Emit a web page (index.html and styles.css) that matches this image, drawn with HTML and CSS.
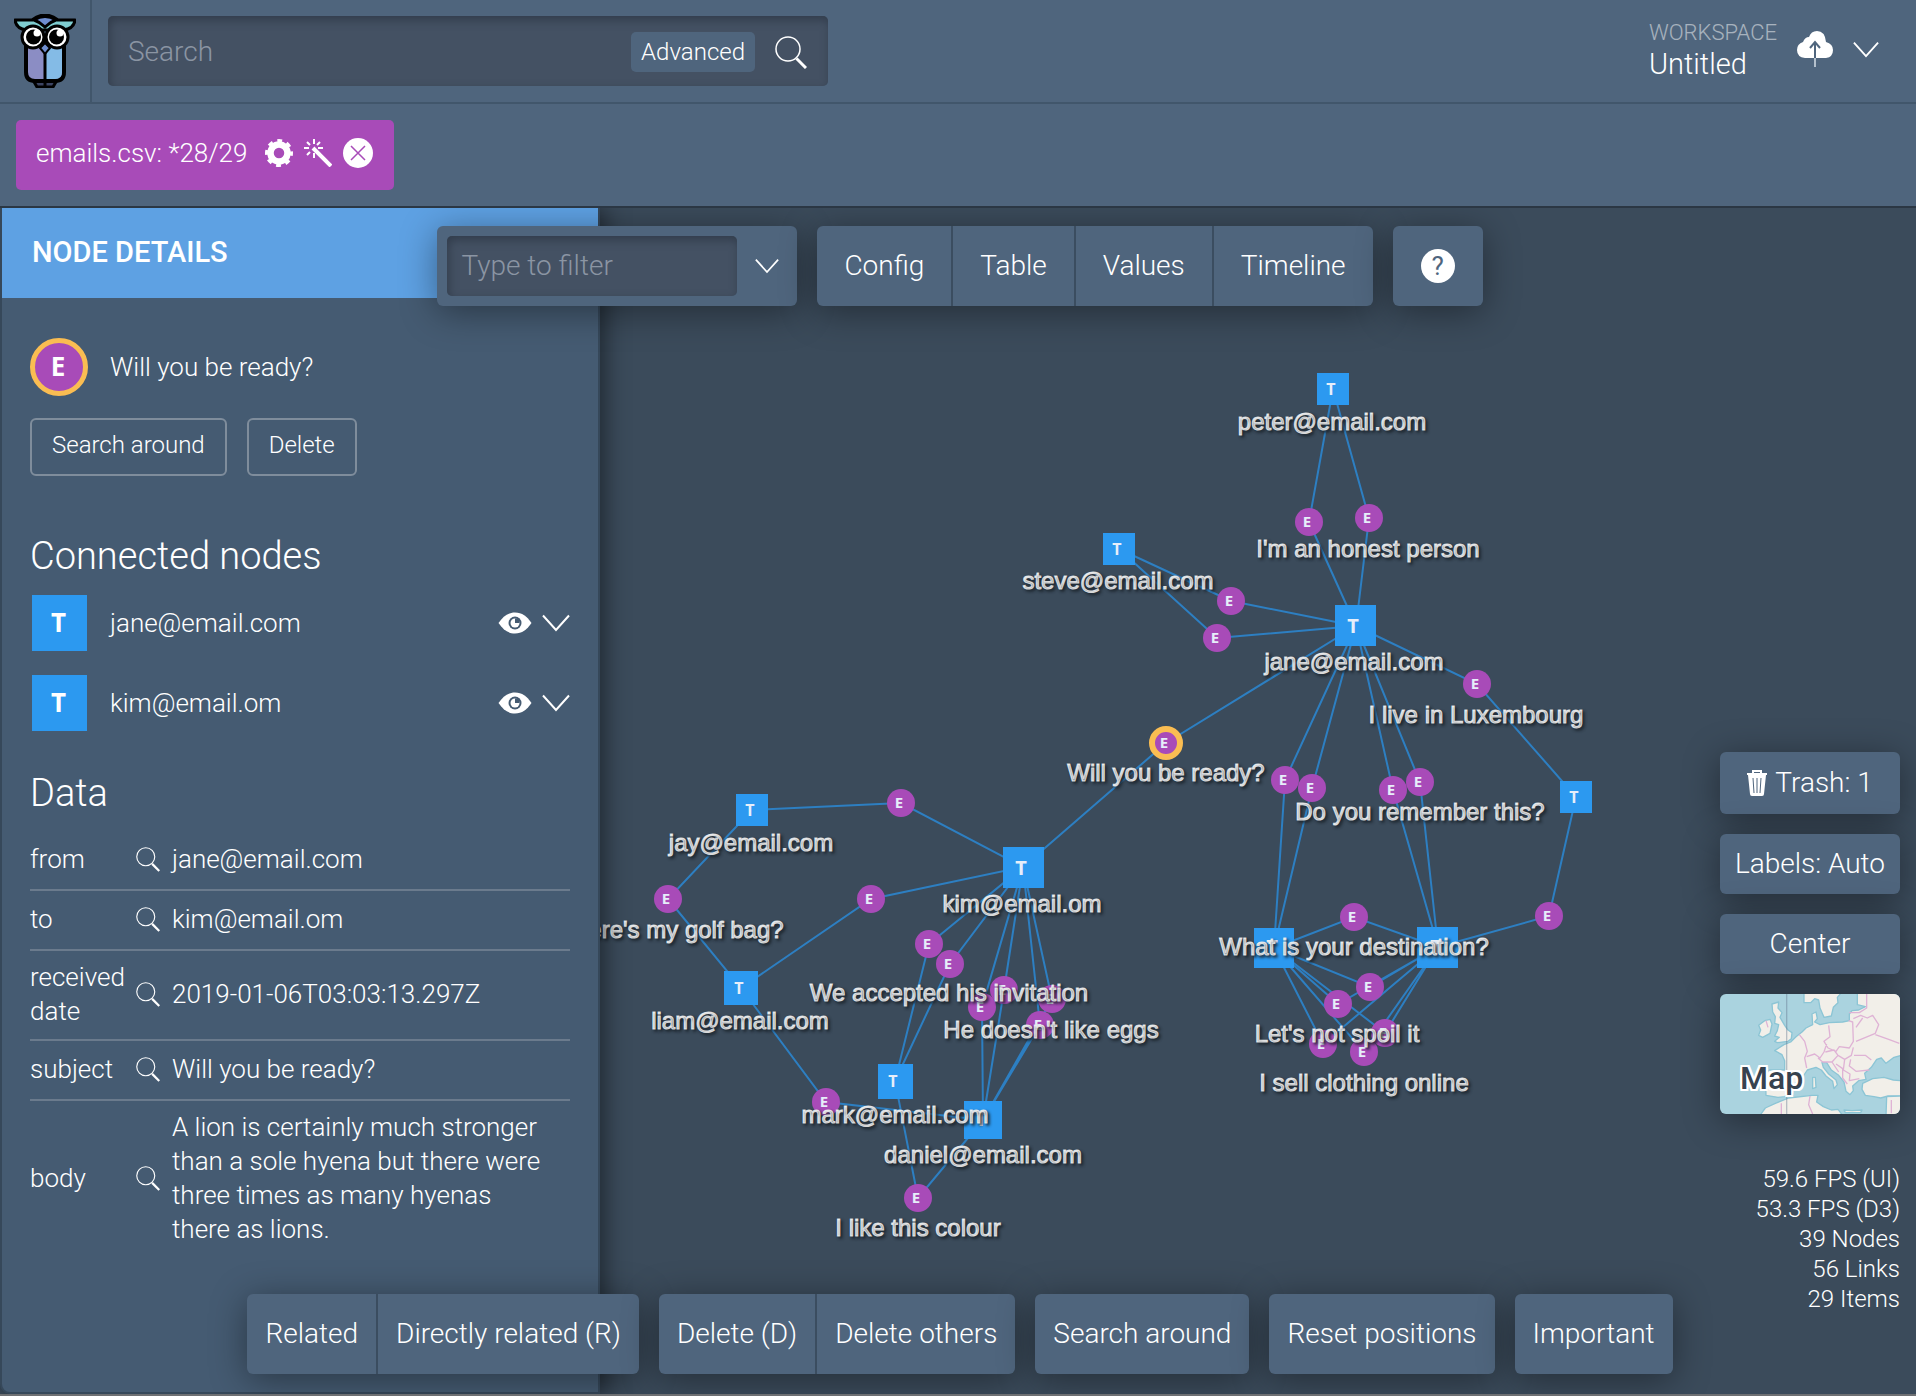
FILE: index.html
```html
<!DOCTYPE html>
<html lang="en">
<head>
<meta charset="utf-8">
<title>Untitled workspace</title>
<link rel="stylesheet" href="styles.css">
</head>
<body>
<svg class="sprite" aria-hidden="true">
  <symbol id="icon-search" viewBox="0 0 32 34"><circle cx="13" cy="14" r="12" fill="none" stroke="currentColor" stroke-width="1.5"/><path d="M21.500 23.500L31 33" stroke="currentColor" stroke-width="3"/></symbol>
  <symbol id="icon-chevron" viewBox="0 0 28 18"><path d="M1 1.500L14 16L27 1.500" fill="none" stroke="currentColor" stroke-width="2"/></symbol>
  <symbol id="icon-eye" viewBox="0 0 34 22"><path d="M0.500 11C5 4.500 10 0.500 17 0.500S29 4.500 33.500 11C29 17.500 24 21.500 17 21.500S5 17.500 0.500 11Z" fill="currentColor"/><circle cx="17" cy="11" r="6.500" fill="#455b72"/><circle cx="17" cy="11" r="4.500" fill="currentColor"/><path d="M17 6.500V11H21.500V6.500Z" fill="#455b72"/></symbol>
</svg>

<header class="topbar">
  <a class="logo" href="#" aria-label="Home">
    <svg width="62" height="74" viewBox="0 0 62 74">
      <path d="M19 66h24l-4 7H23z" fill="#3c4463" stroke="#000" stroke-width="3" stroke-linejoin="round"/>
      <path d="M12 28h38v30q0 9-9 9H21q-9 0-9-9z" fill="#8b8dc4" stroke="#000" stroke-width="4"/>
      <path d="M31 30h17v28q0 7-7 7H31z" fill="#84bbe6"/>
      <path d="M31 34v38" stroke="#000" stroke-width="3"/>
      <path d="M1 6h17q13-10 26 0h17q-1 9-12 10H13Q2 15 1 6z" fill="#7fcdd0" stroke="#000" stroke-width="3" stroke-linejoin="round"/>
      <path d="M20 6q11-7 22 0-6 2-11 7-5-5-11-7z" fill="#6f8ed0" stroke="#000" stroke-width="3"/>
      <circle cx="19" cy="23" r="11" fill="#fff" stroke="#000" stroke-width="3"/>
      <circle cx="43" cy="23" r="11" fill="#fff" stroke="#000" stroke-width="3"/>
      <circle cx="19.500" cy="23" r="7.500"/><circle cx="42.500" cy="23" r="7.500"/>
      <circle cx="23" cy="19" r="3.500" fill="#fff"/><circle cx="46" cy="19" r="3.500" fill="#fff"/>
      <path d="M31 29l5 5-5 6-5-6z" fill="#6f8ed0" stroke="#000" stroke-width="2"/>
    </svg>
  </a>
  <form class="search">
    <input class="search-input" type="text" placeholder="Search" aria-label="Search">
    <button class="search-advanced" type="button">Advanced</button>
    <button class="icon-button" type="button" aria-label="Run search"><svg width="32" height="34"><use href="#icon-search"/></svg></button>
  </form>
  <div class="workspace">
    <div class="workspace-label">
      <span class="workspace-caption">WORKSPACE</span>
      <span class="workspace-name">Untitled</span>
    </div>
    <button class="icon-button" type="button" aria-label="Save workspace">
      <svg width="36" height="36" viewBox="0 0 36 36"><path d="M8 27Q0 26 0 19q0-6 6-8Q8 6 12 6q2-6 8-6 8 0 9 11 7 2 7 8 0 7-7 8z" fill="#fff"/><path d="M18 12v24" stroke="#4f657d" stroke-width="2"/><path d="M18 27v9" stroke="#b4c0cc" stroke-width="2"/><path d="M13 17l5-6 5 6" fill="none" stroke="#4f657d" stroke-width="2"/></svg>
    </button>
    <button class="icon-button" type="button" aria-label="Workspace menu"><svg width="26" height="17"><use href="#icon-chevron"/></svg></button>
  </div>
</header>

<nav class="sources" aria-label="Data sources">
  <div class="source">
    <span>emails.csv: *28/29</span>
    <button class="icon-button" type="button" aria-label="Configure">
      <svg width="28" height="28" viewBox="0 0 28 28"><circle cx="14" cy="14" r="8.500" fill="none" stroke="#fff" stroke-width="6.500"/><circle cx="14" cy="14" r="12" fill="none" stroke="#fff" stroke-width="4" stroke-dasharray="4.700 4.720" stroke-dashoffset="2"/></svg>
    </button>
    <button class="icon-button" type="button" aria-label="Automagic">
      <svg width="28" height="28" viewBox="0 0 28 28" fill="none" stroke="#fff"><path d="M9 9l18 18" stroke-width="4"/><path d="M10 0v5M10 14v5M0 9h5M14 9h5M3 3l3 3M16 3l-3 3M3 16l3-3" stroke-width="2"/></svg>
    </button>
    <button class="icon-button" type="button" aria-label="Close">
      <svg width="30" height="30" viewBox="0 0 30 30"><circle cx="15" cy="15" r="15" fill="#fff"/><path d="M8 8l14 14M22 8L8 22" stroke="#a84bb8" stroke-width="1.500"/></svg>
    </button>
  </div>
</nav>

<main class="stage">
  <svg class="graph" viewBox="0 208 1916 1188" preserveAspectRatio="xMidYMid meet" role="img" aria-label="Graph of emails">
    <g class="links">
      <path d="M1333 389L1309 522L1356 626M1333 389L1369 518L1356 626"/>
      <path d="M1119 549L1231 601L1356 626M1119 549L1217 638L1356 626"/>
      <path d="M1356 626L1166 743L1023 867"/>
      <path d="M1356 626L1285 780L1274 948M1356 626L1312 788L1274 948"/>
      <path d="M1356 626L1393 790L1438 947M1356 626L1420 782L1438 947"/>
      <path d="M1356 626L1477 684L1576 797L1549 916L1438 947"/>
      <path d="M1274 948L1354 917L1438 947M1274 948L1370 987L1438 947M1274 948L1338 1004L1438 947"/>
      <path d="M1274 948L1323 1044L1438 947M1274 948L1364 1052L1438 947M1274 948L1385 1033L1438 947"/>
      <path d="M1023 867L901 803L752 810L668 899L741 988L826 1102L983 1120"/>
      <path d="M1023 867L871 899L741 988"/>
      <path d="M1023 867L929 944L895 1081M1023 867L950 964L895 1081L918 1198L983 1120"/>
      <path d="M1023 867L1004 990L983 1120M1023 867L982 1007L983 1120"/>
      <path d="M1023 867L1052 999L983 1120M1023 867L1040 1025L983 1120"/>
    </g>
    <g class="people">
      <rect x="1317" y="373" width="32" height="32"/><text x="1331" y="395">T</text>
      <rect x="1103" y="533" width="32" height="32"/><text x="1117" y="555">T</text>
      <rect x="1335" y="605" width="41" height="41"/><text class="big" x="1353" y="633">T</text>
      <rect x="1560" y="781" width="32" height="32"/><text x="1574" y="803">T</text>
      <rect x="1254" y="928" width="40" height="40"/><text class="big" x="1272" y="954">T</text>
      <rect x="1417" y="927" width="41" height="41"/><text class="big" x="1436" y="954">T</text>
      <rect x="736" y="794" width="32" height="32"/><text x="750" y="816">T</text>
      <rect x="1003" y="847" width="41" height="41"/><text class="big" x="1021" y="875">T</text>
      <rect x="724" y="971" width="34" height="34"/><text x="739" y="994">T</text>
      <rect x="878" y="1064" width="35" height="35"/><text x="893" y="1087">T</text>
      <rect x="964" y="1101" width="38" height="38"/><text class="big" x="981" y="1126">T</text>
    </g>
    <g class="mails">
      <circle cx="1309" cy="522" r="14"/><text x="1307" y="527">E</text>
      <circle cx="1369" cy="518" r="14"/><text x="1367" y="523">E</text>
      <circle cx="1231" cy="601" r="14"/><text x="1229" y="606">E</text>
      <circle cx="1217" cy="638" r="14"/><text x="1215" y="643">E</text>
      <circle cx="1477" cy="684" r="14"/><text x="1475" y="689">E</text>
      <circle class="selected" cx="1166" cy="743" r="14"/><text x="1164" y="748">E</text>
      <circle cx="1285" cy="780" r="14"/><text x="1283" y="785">E</text>
      <circle cx="1312" cy="788" r="14"/><text x="1310" y="793">E</text>
      <circle cx="1393" cy="790" r="14"/><text x="1391" y="795">E</text>
      <circle cx="1420" cy="782" r="14"/><text x="1418" y="787">E</text>
      <circle cx="1549" cy="916" r="14"/><text x="1547" y="921">E</text>
      <circle cx="1354" cy="917" r="14"/><text x="1352" y="922">E</text>
      <circle cx="1385" cy="1033" r="14"/><text x="1383" y="1038">E</text>
      <circle cx="1370" cy="987" r="14"/><text x="1368" y="992">E</text>
      <circle cx="1338" cy="1004" r="14"/><text x="1336" y="1009">E</text>
      <circle cx="1323" cy="1044" r="14"/><text x="1321" y="1049">E</text>
      <circle cx="1364" cy="1052" r="14"/><text x="1362" y="1057">E</text>
      <circle cx="901" cy="803" r="14"/><text x="899" y="808">E</text>
      <circle cx="668" cy="899" r="14"/><text x="666" y="904">E</text>
      <circle cx="871" cy="899" r="14"/><text x="869" y="904">E</text>
      <circle cx="929" cy="944" r="14"/><text x="927" y="949">E</text>
      <circle cx="950" cy="964" r="14"/><text x="948" y="969">E</text>
      <circle cx="1004" cy="990" r="14"/><text x="1002" y="995">E</text>
      <circle cx="982" cy="1007" r="14"/><text x="980" y="1012">E</text>
      <circle cx="1052" cy="999" r="14"/><text x="1050" y="1004">E</text>
      <circle cx="1040" cy="1025" r="14"/><text x="1038" y="1030">E</text>
      <circle cx="826" cy="1102" r="14"/><text x="824" y="1107">E</text>
      <circle cx="918" cy="1198" r="14"/><text x="916" y="1203">E</text>
    </g>
    <g class="labels">
      <text x="1332" y="430">peter@email.com</text>
      <text x="1368" y="557">I'm an honest person</text>
      <text x="1118" y="589">steve@email.com</text>
      <text x="1354" y="670">jane@email.com</text>
      <text x="1476" y="723">I live in Luxembourg</text>
      <text x="1166" y="781">Will you be ready?</text>
      <text x="1420" y="820">Do you remember this?</text>
      <text x="1354" y="955">What is your destination?</text>
      <text x="1337" y="1042">Let's not spoil it</text>
      <text x="1364" y="1091">I sell clothing online</text>
      <text x="751" y="851">jay@email.com</text>
      <text x="668" y="938">Where's my golf bag?</text>
      <text x="1022" y="912">kim@email.om</text>
      <text x="949" y="1001">We accepted his invitation</text>
      <text x="1051" y="1038">He doesn't like eggs</text>
      <text x="740" y="1029">liam@email.com</text>
      <text x="895" y="1123">mark@email.com</text>
      <text x="983" y="1163">daniel@email.com</text>
      <text x="918" y="1236">I like this colour</text>
    </g>
  </svg>

  <aside class="details">
    <h1 class="details-title">NODE DETAILS</h1>
    <div class="details-body">
      <div class="node">
        <span class="node-mail">E</span>
        <span>Will you be ready?</span>
      </div>
      <div class="actions">
        <button class="outline" type="button">Search around</button>
        <button class="outline" type="button">Delete</button>
      </div>
      <h2>Connected nodes</h2>
      <ul class="connected">
        <li class="node">
          <span class="node-person">T</span>
          <span class="node-name">jane@email.com</span>
          <button class="icon-button" type="button" aria-label="Show jane@email.com"><svg width="34" height="22"><use href="#icon-eye"/></svg></button>
          <button class="icon-button" type="button" aria-label="Expand jane@email.com"><svg width="28" height="18"><use href="#icon-chevron"/></svg></button>
        </li>
        <li class="node">
          <span class="node-person">T</span>
          <span class="node-name">kim@email.om</span>
          <button class="icon-button" type="button" aria-label="Show kim@email.om"><svg width="34" height="22"><use href="#icon-eye"/></svg></button>
          <button class="icon-button" type="button" aria-label="Expand kim@email.om"><svg width="28" height="18"><use href="#icon-chevron"/></svg></button>
        </li>
      </ul>
      <h2>Data</h2>
      <table class="data">
        <tr><th scope="row">from</th><td class="data-icon"><button class="icon-button" type="button" aria-label="Search from"><svg width="24" height="26"><use href="#icon-search"/></svg></button></td><td>jane@email.com</td></tr>
        <tr><th scope="row">to</th><td class="data-icon"><button class="icon-button" type="button" aria-label="Search to"><svg width="24" height="26"><use href="#icon-search"/></svg></button></td><td>kim@email.om</td></tr>
        <tr><th scope="row">received date</th><td class="data-icon"><button class="icon-button" type="button" aria-label="Search received date"><svg width="24" height="26"><use href="#icon-search"/></svg></button></td><td>2019-01-06T03:03:13.297Z</td></tr>
        <tr><th scope="row">subject</th><td class="data-icon"><button class="icon-button" type="button" aria-label="Search subject"><svg width="24" height="26"><use href="#icon-search"/></svg></button></td><td>Will you be ready?</td></tr>
        <tr><th scope="row">body</th><td class="data-icon"><button class="icon-button" type="button" aria-label="Search body"><svg width="24" height="26"><use href="#icon-search"/></svg></button></td><td>A lion is certainly much stronger than a sole hyena but there were three times as many hyenas there as lions.</td></tr>
      </table>
    </div>
  </aside>

  <div class="toolbar toolbar-top">
    <div class="group filter">
      <input class="filter-input" type="text" placeholder="Type to filter" aria-label="Filter">
      <button class="icon-button filter-toggle" type="button" aria-label="Filter options"><svg width="24" height="16"><use href="#icon-chevron"/></svg></button>
    </div>
    <div class="group">
      <button class="tool wide" type="button">Config</button>
      <button class="tool wide" type="button">Table</button>
      <button class="tool wide" type="button">Values</button>
      <button class="tool wide" type="button">Timeline</button>
    </div>
    <div class="group">
      <button class="tool help" type="button" aria-label="Help"><span class="help-mark">?</span></button>
    </div>
  </div>

  <div class="rail">
    <button class="rail-button" type="button"><svg width="20" height="26" viewBox="0 0 20 26"><path d="M6 3V1h8v2" fill="none" stroke="#fff" stroke-width="2"/><path d="M0 3h20v2H0zM1 5h18l-2 19q0 2-2 2H5q-2 0-2-2z" fill="#fff"/><path d="M6 8l1 15M10 8v15M14 8l-1 15" stroke="#4f657d" stroke-width="1"/></svg>Trash: 1</button>
    <button class="rail-button" type="button">Labels: Auto</button>
    <button class="rail-button" type="button">Center</button>
    <button class="map" type="button">
      <svg class="map-tile" viewBox="12 12 540 360" preserveAspectRatio="xMidYMid slice" aria-hidden="true">
        <rect x="12" y="12" width="540" height="360" fill="#aad3df"/>
        <g fill="#f2efe9" stroke="#8cc5d5" stroke-width="4" stroke-linejoin="round">
          <path d="M168 42l20-6-2 18 12 14-6 14 14 24 10 14 12 8-2 18-10 8-32 4-8-4 14-12-14-4 8-16 4-18-12-4 2-20-8-14z"/>
          <path d="M146 92l16-4 6 14-6 28-22 12-12-6 6-16-6-14z"/>
          <path d="M264 8v30l20 0 12-12 12 4 4 24 12 28 22-4 6-26 14-14-2-16 14-16z"/>
          <path d="M398 8L424 8L424 44L448 50L428 60L408 62L400 72L400 92L380 96L340 98L312 104L296 96L304 86L300 66L288 72L290 104L270 114L258 126L240 140L224 156L204 164L176 182L198 194L206 212L206 240L160 240L148 250L150 316L186 322L206 320L228 308L238 280L262 258L274 240L300 232L316 240L330 258L350 274L354 296L364 284L360 270L338 252L322 232L318 218L332 218L346 240L368 256L384 276L390 304L402 314L412 302L410 288L428 272L450 268L446 250L466 232L482 208L496 204L510 220L534 202L556 196L556 8Z"/>
          <path d="M290 262l8 0 2 30-10 4z"/>
          <path d="M132 376l16-22 30-14 40-16 70-8 18 0-4 20 20 14 24 10 20-2 14 18z"/>
          <path d="M440 280l30-14 34-4 28 8 24 2v46l-40 0-22 6-20-4-26-4-10-18z"/>
          <path d="M510 376l2-56 44-2v58zM384 360l24 2 30-2-4 8-46 0z"/>
        </g>
        <g fill="none" stroke="#dfb3d5" stroke-width="4" stroke-linejoin="round">
          <path d="M338 106l4 34-18 14 12 20 24 10 10-14 30 4 12-20-2-58-12-4M250 134l16 20 8 30-8 20 6 30M272 200l24-8 16 12 12-18 8-24M328 186l26-6 12 16-18 20-28 0-14-12M366 196l20 12 20-12 6-24M404 208l-4 20 20 16 40-4M414 196h34l18 14M360 222l20 14 0 28 14 18M348 216l20 30M386 208l-4 32 20 12-2 20 30-6M412 86l22-10 20 8 16-8 18 28-10 26-58 24M400 68l30 0 22-14V12M478 134l40 14 32 12M440 84l-20 28M196 340v34M282 318l-4 26 12 28M526 330v40M150 92l6 20"/>
        </g>
        <path d="M212 12V372" stroke="#60748a" stroke-opacity=".4" stroke-width="4"/>
      </svg>
      <span class="map-label">Map</span>
    </button>
    <ul class="stats">
      <li>59.6 FPS (UI)</li>
      <li>53.3 FPS (D3)</li>
      <li>39 Nodes</li>
      <li>56 Links</li>
      <li>29 Items</li>
    </ul>
  </div>

  <div class="toolbar toolbar-bottom">
    <div class="group">
      <button class="tool" type="button">Related</button>
      <button class="tool" type="button">Directly related (R)</button>
    </div>
    <div class="group">
      <button class="tool" type="button">Delete (D)</button>
      <button class="tool" type="button">Delete others</button>
    </div>
    <div class="group"><button class="tool" type="button">Search around</button></div>
    <div class="group"><button class="tool" type="button">Reset positions</button></div>
    <div class="group"><button class="tool" type="button">Important</button></div>
  </div>
</main>
</body>
</html>
```
FILE: styles.css
```css
* {
  box-sizing: border-box;
}

body {
  margin: 0;
  min-height: 100vh;
  display: flex;
  flex-direction: column;
  background: #3b4b5b;
  color: #fff;
  font-family: Roboto, "Liberation Sans", sans-serif;
  font-size: 26px;
  font-weight: 300;
  line-height: 34px;
}

button,
input {
  font: inherit;
  color: inherit;
  border: 0;
  padding: 0;
  margin: 0;
  background: none;
}

button {
  cursor: pointer;
  white-space: nowrap;
}

h1,
h2,
ul {
  margin: 0;
  padding: 0;
  list-style: none;
}

input::placeholder {
  color: #8b95a3;
  opacity: 1;
}

svg {
  display: block;
}

.sprite {
  display: none;
}

.icon-button {
  display: flex;
  align-items: center;
  justify-content: center;
}

/* Top bar */
.topbar {
  display: flex;
  align-items: center;
  height: 104px;
  background: #4f657d;
  border-bottom: 2px solid #41566b;
}

.logo {
  display: flex;
  align-items: center;
  align-self: stretch;
  padding: 0 14px;
  border-right: 2px solid #41566b;
}

.search {
  display: flex;
  align-items: center;
  flex: 0 1 720px;
  height: 70px;
  margin-left: 16px;
  padding: 2px 21px 0 20px;
  gap: 20px;
  border-radius: 5px;
  background: #445163;
  box-shadow: inset 2px 4px 10px #323d4c;
}

.search-input {
  flex: 1;
  min-width: 0;
  font-size: 28px;
}

.search-input:focus,
.filter-input:focus {
  outline: 0;
}

.search-advanced {
  height: 40px;
  padding: 0 10px;
  border-radius: 5px;
  background: #4f657d;
  font-size: 24px;
}

.workspace {
  display: flex;
  align-items: center;
  gap: 20px;
  margin-left: auto;
  padding: 0 37px 4px 0;
}

.workspace-label {
  display: flex;
  flex-direction: column;
}

.workspace-caption {
  font-size: 22px;
  line-height: 30px;
  opacity: .5;
}

.workspace-name {
  font-size: 29px;
  line-height: 32px;
}

/* Data sources */
.sources {
  display: flex;
  height: 104px;
  padding: 16px;
  background: #4f657d;
  border-bottom: 2px solid #2b3744;
}

.source {
  display: flex;
  align-items: center;
  gap: 11px;
  height: 70px;
  padding: 0 21px 4px 20px;
  border-radius: 5px;
  background: #a84bb8;
}

.source span {
  margin-right: 7px;
}

/* Stage */
.stage {
  position: relative;
  flex: 1;
  display: flex;
  overflow: hidden;
  border-bottom: 2px solid #6e7073;
}

.graph {
  position: absolute;
  top: 0;
  left: 0;
  width: 100%;
}

.links path {
  fill: none;
  stroke: #2d7fc2;
  stroke-width: 2;
}

.people rect {
  fill: #2c99f0;
}

.people text,
.mails text {
  font: 700 16px "Open Sans", sans-serif;
  fill: #e6eefa;
  text-anchor: middle;
}

.people .big {
  font-size: 20px;
}

.mails text {
  font-size: 15px;
}

.mails circle {
  fill: #a84bb8;
}

.mails .selected {
  stroke: #fabd52;
  stroke-width: 6;
}

.labels text {
  font: 24px "Liberation Sans", Arial, sans-serif;
  fill: #f4f4f4;
  stroke: #f4f4f4;
  stroke-opacity: .8;
  stroke-width: 1;
  text-anchor: middle;
  text-shadow: 2px 2px 3px #1c242c;
}

/* Node details */
.details {
  position: relative;
  flex: 0 0 600px;
  border: solid #36485a;
  border-width: 0 2px 2px;
  border-radius: 0 0 0 10px;
  background: #455b72;
  box-shadow: 4px 0 24px rgba(0, 0, 0, .5);
}

.details-title {
  padding: 27px 30px 29px;
  background: #5ea1e3;
  font-size: 29px;
  font-weight: 500;
  line-height: 34px;
}

.details-body {
  padding: 40px 28px 0;
}

.details h2 {
  margin: 40px 0 15px;
  font-size: 38px;
  font-weight: 300;
  line-height: 44px;
}

.node {
  display: flex;
  align-items: center;
  gap: 10px;
}

.node-mail,
.node-person {
  flex: none;
  width: 58px;
  height: 58px;
  margin-right: 12px;
  text-align: center;
  font: 700 26px/46px "Open Sans", sans-serif;
}

.node-mail {
  padding-right: 2px;
  border: 5px solid #fabd52;
  border-radius: 50%;
  background: #a84bb8;
}

.node-person {
  width: 55px;
  height: 56px;
  margin: 0 13px 0 2px;
  padding-right: 2px;
  background: #2c99f0;
  line-height: 54px;
}

.node-name {
  flex: 1;
}

.actions {
  display: flex;
  gap: 20px;
  margin: 22px 0 58px;
}

.outline {
  height: 58px;
  padding: 0 20px 4px;
  border: 2px solid #7f8d9c;
  border-radius: 6px;
  font-size: 24px;
}

.connected {
  display: flex;
  flex-direction: column;
  gap: 24px;
  padding-top: 2px;
}

.data {
  width: 100%;
  border-collapse: collapse;
}

.data tr {
  border-bottom: 2px solid #6b7b8d;
}

.data tr:last-child {
  border-bottom: 0;
}

.data th,
.data td {
  height: 60px;
  padding: 9px 0 11px;
  font-weight: 300;
  text-align: left;
}

.data th {
  width: 106px;
}

.data td:last-child {
  padding-right: 16px;
}

.data .data-icon {
  width: 36px;
}

/* Floating toolbars */
.toolbar {
  position: absolute;
  left: 0;
  right: 0;
  display: flex;
  justify-content: center;
  gap: 20px;
  padding-left: 4px;
  pointer-events: none;
}

.toolbar-top {
  top: 18px;
}

.toolbar-bottom {
  bottom: 20px;
}

.group {
  display: flex;
  height: 80px;
  border-radius: 6px;
  background: #4f657d;
  box-shadow: 0 6px 36px rgba(0, 0, 0, .4);
  font-size: 28px;
  pointer-events: auto;
}

.tool {
  padding: 0 18px;
}

.tool.wide {
  padding: 0 27px;
}

.tool + .tool {
  border-left: 2px solid #3b4d60;
}

.filter {
  padding: 10px 0 10px 10px;
}

.filter-input {
  width: 290px;
  padding: 0 14px;
  border-radius: 5px;
  background: #445163;
  box-shadow: inset 2px 4px 10px #323d4c;
}

.filter-toggle {
  width: 60px;
}

.tool.help {
  padding: 0 28px;
}

.help-mark {
  display: block;
  width: 34px;
  height: 34px;
  border-radius: 50%;
  background: #fff;
  color: #4f657d;
  font-size: 26px;
  font-weight: 400;
}

.rail {
  position: absolute;
  right: 16px;
  bottom: 80px;
  display: flex;
  flex-direction: column;
  gap: 20px;
  width: 180px;
}

.rail-button {
  display: flex;
  align-items: center;
  justify-content: center;
  gap: 8px;
  height: 60px;
  border-radius: 6px;
  background: #4f657d;
  box-shadow: 0 6px 36px rgba(0, 0, 0, .4);
  font-size: 28px;
}

.rail-button:first-child {
  height: 62px;
}

.map {
  display: grid;
  border-radius: 6px;
  overflow: hidden;
  box-shadow: 0 6px 36px rgba(0, 0, 0, .4);
}

.map-tile,
.map-label {
  grid-area: 1 / 1;
}

.map-tile {
  width: 180px;
  height: 120px;
}

.map-label {
  align-self: end;
  justify-self: start;
  padding: 0 20px 18px;
  color: #36424f;
  font-size: 32px;
  font-weight: 500;
  line-height: 36px;
  text-shadow: 2px 0 #fff, -2px 0 #fff, 0 2px #fff, 0 -2px #fff, 2px 2px #fff, -2px -2px #fff, 2px -2px #fff, -2px 2px #fff;
}

.stats {
  padding-top: 30px;
  text-align: right;
  font-size: 24px;
  line-height: 30px;
}
```
